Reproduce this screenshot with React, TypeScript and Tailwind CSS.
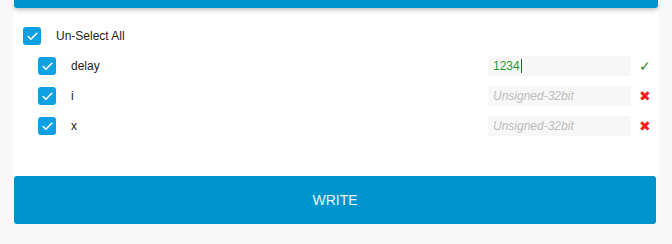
import { Check } from 'lucide-react';

type Field = { name: string; value: string };

const FIELDS: Field[] = [
  { name: 'delay', value: '1234' },
  { name: 'i', value: '' },
  { name: 'x', value: '' },
];

function Box() {
  return (
    <span className="flex h-[18px] w-[18px] shrink-0 items-center justify-center rounded-[3px] bg-[#0ea0e0]">
      <Check className="h-[13px] w-[13px] text-white" strokeWidth={3} />
    </span>
  );
}

function FieldRow({ field }: { field: Field }) {
  const ok = field.value !== '';
  return (
    <div className="flex h-[30px] items-center pl-[25px] pr-[7px]">
      <Box />
      <span className="ml-[15px] flex-1 text-[12px] text-[#222]">{field.name}</span>
      <div className="flex h-[20px] w-[143px] items-center bg-[#f7f7f7] px-[5px] text-[12px]">
        {ok ? (
          <>
            <span className="text-[#2a9a2a]">{field.value}</span>
            <span className="ml-px h-[14px] w-px bg-[#1f5f1f]" />
          </>
        ) : (
          <span className="italic text-[#bdbdbd]">Unsigned-32bit</span>
        )}
      </div>
      <span className="ml-[7px] flex w-[14px] justify-center text-[14px]">
        {ok ? <span className="text-[#2a8a2a]">✓</span> : <span className="text-[#ff1a1a]">✖</span>}
      </span>
    </div>
  );
}

export default function App() {
  return (
    <div className="h-[244px] w-[672px] bg-[#f9f9f9] px-[13px] font-['Liberation_Sans',Arial,sans-serif]">
      <div className="flex h-[176px] flex-col bg-white">
        <div className="mx-px h-[8px] rounded-b-[3px] bg-[#0094ce] shadow-[0_2px_4px_rgba(0,0,0,0.25)]" />
        <div className="mt-[19px] flex h-[18px] items-center pl-[10px]">
          <Box />
          <span className="ml-[15px] text-[12px] text-[#222]">Un-Select All</span>
        </div>
        <div className="mt-[6px] flex flex-col">
          {FIELDS.map(f => (
            <FieldRow key={f.name} field={f} />
          ))}
        </div>
      </div>
      <button className="mx-px flex h-[48px] w-[642px] items-center justify-center rounded-[3px] bg-[#0094ce] text-[14px] text-[#eaf6fb]">
        WRITE
      </button>
    </div>
  );
}
